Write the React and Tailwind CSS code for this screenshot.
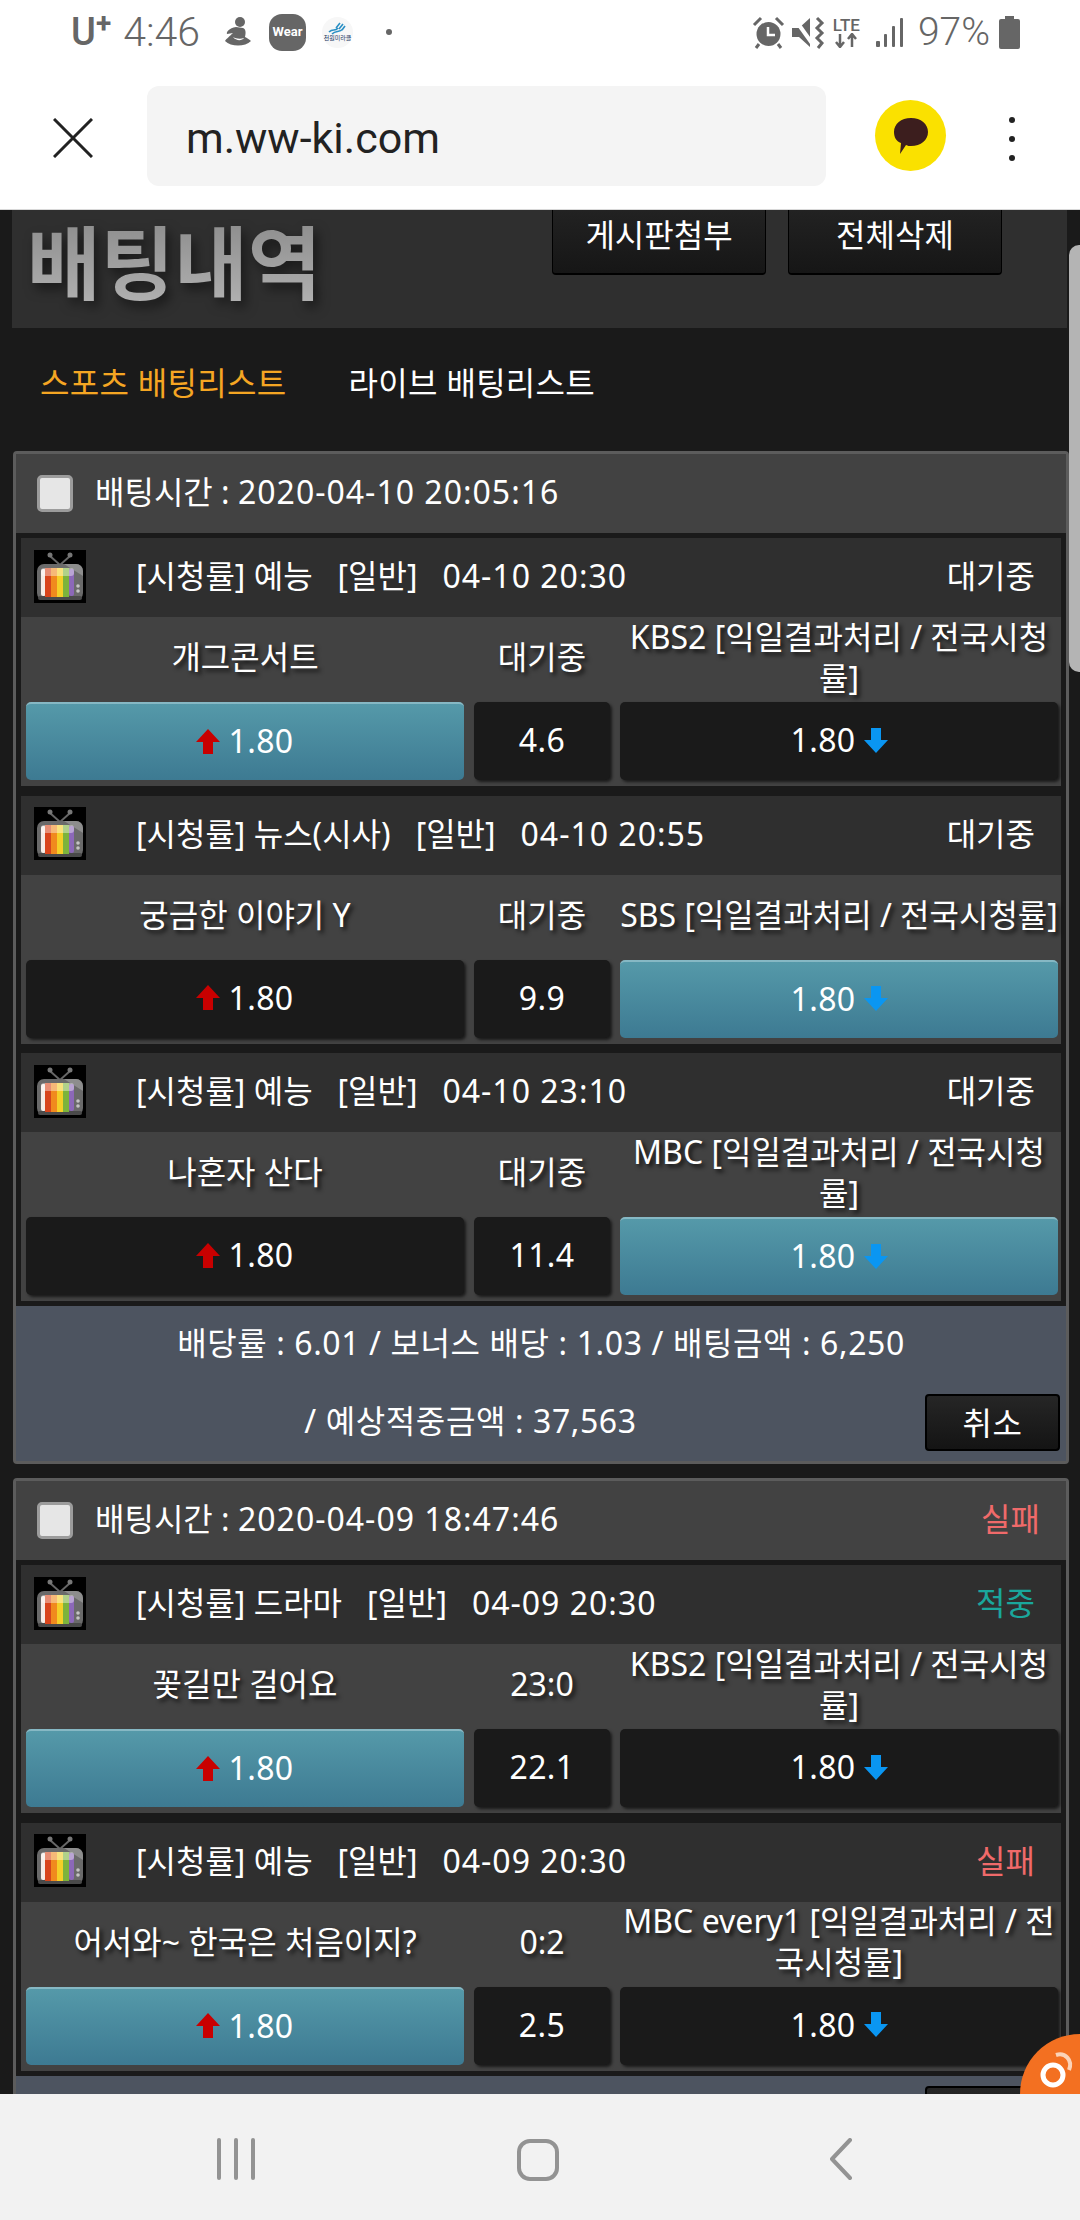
const cards = [
  {
    time: '2020-04-10 20:05:16',
    result: '',
    rows: [
      { title: '[시청률] 예능', date: '04-10 20:30', status: '대기중', statusColor: 'text-white', home: '개그콘서트', mid: '대기중', away: 'KBS2 [익일결과처리 / 전국시청률]', line: '4.6', pick: 'home' },
      { title: '[시청률] 뉴스(시사)', date: '04-10 20:55', status: '대기중', statusColor: 'text-white', home: '궁금한 이야기 Y', mid: '대기중', away: 'SBS [익일결과처리 / 전국시청률]', line: '9.9', pick: 'away' },
      { title: '[시청률] 예능', date: '04-10 23:10', status: '대기중', statusColor: 'text-white', home: '나혼자 산다', mid: '대기중', away: 'MBC [익일결과처리 / 전국시청률]', line: '11.4', pick: 'away' },
    ],
  },
  {
    time: '2020-04-09 18:47:46',
    result: '실패',
    rows: [
      { title: '[시청률] 드라마', date: '04-09 20:30', status: '적중', statusColor: 'text-[#1aa79c]', home: '꽃길만 걸어요', mid: '23:0', away: 'KBS2 [익일결과처리 / 전국시청률]', line: '22.1', pick: 'home' },
      { title: '[시청률] 예능', date: '04-09 20:30', status: '실패', statusColor: 'text-[#f06a6a]', home: '어서와~ 한국은 처음이지?', mid: '0:2', away: 'MBC every1 [익일결과처리 / 전국시청률]', line: '2.5', pick: 'home' },
    ],
  },
];

function UpArrow() {
  return (
    <svg width="24" height="25" viewBox="0 0 24 25" className="shrink-0">
      <path d="M12 0 L24 13 L17 13 L17 25 L7 25 L7 13 L0 13 Z" fill="#c90000" />
    </svg>
  );
}

function DownArrow() {
  return (
    <svg width="24" height="25" viewBox="0 0 24 25" className="shrink-0">
      <path d="M12 25 L24 12 L17 12 L17 0 L7 0 L7 12 L0 12 Z" fill="#0a96f2" />
    </svg>
  );
}

function TvIcon() {
  return (
    <svg width="52" height="53" viewBox="0 0 52 53" className="shrink-0">
      <rect width="52" height="53" fill="#000" />
      <path d="M16 6 L26 15 L36 6" stroke="#666" strokeWidth="2" fill="none" />
      <circle cx="16" cy="5" r="2.5" fill="#777" />
      <circle cx="36" cy="5" r="2.5" fill="#777" />
      <rect x="3" y="14" width="46" height="36" rx="7" fill="#6a6a6a" />
      <path d="M30 14 H42 a7 7 0 0 1 7 7 V26 Z" fill="#8d8d8d" />
      <rect x="4" y="46" width="44" height="4" rx="2" fill="#4a4a4a" />
      <g>
        <rect x="7" y="19" width="5" height="27" rx="2" fill="#f5ece6" />
        <rect x="11" y="18" width="6" height="29" fill="#d8451c" />
        <rect x="17" y="18" width="6" height="29" fill="#f08a1e" />
        <rect x="23" y="18" width="6" height="29" fill="#f4cf28" />
        <rect x="29" y="18" width="6" height="29" fill="#7cb33c" />
        <rect x="35" y="19" width="5" height="27" rx="2" fill="#8c68b8" />
        <rect x="7" y="18" width="33" height="8" rx="3" fill="#fff" opacity="0.4" />
      </g>
      <circle cx="44" cy="36" r="1.8" fill="#c4c4c4" />
      <circle cx="44" cy="41" r="1.8" fill="#c4c4c4" />
    </svg>
  );
}

function Odds({ picked, children }) {
  return (
    <div
      className={`flex h-[78px] items-center justify-center gap-[8px] rounded-[5px] pb-[2px] text-[32px] leading-[44px] tracking-[0.4px] text-white ${
        picked
          ? 'border-t-2 border-[#86b8c4] bg-gradient-to-b from-[#5599a9] to-[#3d7a92]'
          : 'bg-[#1a1a1a] shadow-[2px_2px_3px_rgba(0,0,0,0.6)]'
      }`}
    >
      {children}
    </div>
  );
}

function BetRow({ row }) {
  const nameClass =
    'flex items-center justify-center pb-[6px] text-center text-[32px] leading-[41px] text-white break-all [text-shadow:3px_3px_4px_rgba(0,0,0,0.75)]';

  return (
    <div className="bg-[#424242]">
      <div className="flex h-[79px] items-center bg-[#2f2f2f] pb-[3px] pl-[13px] pr-[26px] text-[32px] leading-[44px] text-white">
        <TvIcon />
        <div className="ml-[50px] flex-1 whitespace-pre">
          {row.title}   [일반]   <span className="tracking-[1px]">{row.date}</span>
        </div>
        <div className={row.statusColor}>{row.status}</div>
      </div>
      <div className="grid grid-cols-[438px_136px_438px] grid-rows-[85px_78px] gap-x-[10px] px-[5px]">
        <div className={nameClass}>{row.home}</div>
        <div className={nameClass}>{row.mid}</div>
        <div className={nameClass}>{row.away}</div>
        <Odds picked={row.pick === 'home'}>
          <UpArrow />
          <span>1.80</span>
        </Odds>
        <Odds>
          <span>{row.line}</span>
        </Odds>
        <Odds picked={row.pick === 'away'}>
          <span>1.80</span>
          <DownArrow />
        </Odds>
      </div>
      <div className="h-[6px]" />
    </div>
  );
}

function CancelButton() {
  return (
    <button className="h-[57px] w-[135px] shrink-0 rounded-[4px] border-2 border-black bg-gradient-to-b from-[#262626] to-[#141414] text-[32px] leading-[44px] text-white">
      취소
    </button>
  );
}

function BetCard({ card, index }) {
  return (
    <div className={`ml-[13px] w-[1056px] rounded-[4px] border-[3px] border-[#5c5c5c] bg-[#1a1a1a] ${index > 0 ? 'mt-[14px]' : ''}`}>
      <div className="flex h-[79px] items-center bg-[#424242] pb-[3px] pl-[21px] pr-[26px] text-[32px] leading-[44px] text-white">
        <div className="mt-[3px] h-[37px] w-[36px] rounded-[5px] border-[3px] border-[#9c9c9c] bg-[#e6e6e6]" />
        <div className="ml-[22px] flex-1">
          배팅시간 : <span className="tracking-[1px]">{card.time}</span>
        </div>
        <div className="text-[#f06a6a]">{card.result}</div>
      </div>
      <div className="flex flex-col gap-[9.5px] px-[5px] pt-[5px]">
        {card.rows.map((row, i) => (
          <BetRow key={i} row={row} />
        ))}
      </div>
      {index === 0 ? (
        <div className="mt-[5px] bg-[#4d5460] text-[32px] tracking-[0.6px] text-white">
          <div className="h-[78px] text-center leading-[74px]">
            배당률 : 6.01 / 보너스 배당 : 1.03 / 배팅금액 : 6,250
          </div>
          <div className="flex h-[77px] items-center pr-[6px]">
            <div className="flex-1 pb-[4px] text-center">/ 예상적중금액 : 37,563</div>
            <CancelButton />
          </div>
        </div>
      ) : (
        <div className="mt-[5px] flex justify-end bg-[#4d5460] pr-[6px] pt-[10px]">
          <CancelButton />
        </div>
      )}
    </div>
  );
}

function StatusBar() {
  return (
    <div className="flex h-[70px] items-center pb-[6px] pl-[71px] pr-[60px] text-[#666666]">
      <span className="relative text-[38px] font-medium leading-none font-['Roboto',sans-serif]">
        U<span className="relative -top-[12px] text-[28px] font-bold">+</span>
      </span>
      <span className="ml-[12px] text-[41px] font-light leading-none font-['Roboto',sans-serif]">4:46</span>
      <svg width="28" height="32" viewBox="0 0 28 32" className="ml-[24px]">
        <circle cx="16" cy="6" r="5" fill="#666" />
        <path d="M12 11 C5 12 2 16 3 18 L9 17 C6 20 2 23 1 25 C7 31 21 31 27 25 C25 23 23 22 21 21 C22 17 22 13 19 12 Z M9 21 C12 23 17 23 20 22 C18 25 12 25 9 21 Z" fill="#666" />
      </svg>
      <div className="ml-[17px] flex h-[37px] w-[37px] items-center justify-center rounded-[13px] bg-[#666666] text-[13px] font-bold text-white font-['Roboto',sans-serif]">
        Wear
      </div>
      <div className="ml-[16px] flex h-[31px] w-[31px] flex-col items-center justify-center rounded-full bg-[#f7f7f7]">
        <svg width="18" height="13" viewBox="0 0 18 13">
          <path d="M1 10 C5 6 7 10 10 6 M4 12 C8 8 11 11 15 7 M8 6 L12 1 M11 7 L15 2 M14 8 L17 4" stroke="#2a8fc4" strokeWidth="1.6" fill="none" />
        </svg>
        <span className="text-[6px] leading-[7px] text-[#16365f]">천원미라클</span>
      </div>
      <div className="ml-[33px] h-[6px] w-[6px] rounded-full bg-[#666666]" />
      <div className="flex-1" />
      <svg width="33" height="33" viewBox="0 0 33 33">
        <circle cx="16.5" cy="18" r="12" fill="#666" />
        <path d="M16 11 V19 H23" stroke="#fff" strokeWidth="2.5" fill="none" />
        <path d="M2 9 L9 2 M31 9 L24 2 M7 28 L4 32 M26 28 L29 32" stroke="#666" strokeWidth="3" />
      </svg>
      <svg width="34" height="33" viewBox="0 0 34 33" className="ml-[7px]">
        <path d="M0 12 H7 L18 2 V31 L7 21 H0 Z" fill="#666" />
        <path d="M2 2 L22 30" stroke="#fff" strokeWidth="4" />
        <path d="M25 2 L30 7 L25 12 L30 17 L25 22 L30 27 L26 32" stroke="#666" strokeWidth="3" fill="none" />
      </svg>
      <div className="ml-[5px] flex w-[31px] flex-col items-center">
        <span className="text-[17px] font-medium leading-[16px] font-['Roboto',sans-serif]">LTE</span>
        <svg width="24" height="15" viewBox="0 0 24 15">
          <path d="M6 1 V13 M2 9 L6 14 L10 9 M18 14 V2 M14 6 L18 1 L22 6" stroke="#666" strokeWidth="2.5" fill="none" />
        </svg>
      </div>
      <svg width="28" height="32" viewBox="0 0 28 32" className="ml-[14px]">
        <rect x="0" y="25" width="4" height="6" rx="1" fill="#666" />
        <rect x="8" y="18" width="3" height="13" rx="1" fill="#666" />
        <rect x="16" y="10" width="3" height="21" rx="1" fill="#666" />
        <rect x="24" y="2" width="3" height="29" rx="1" fill="#666" />
      </svg>
      <span className="ml-[14px] text-[39px] font-light leading-none font-['Roboto',sans-serif]">97%</span>
      <svg width="21" height="33" viewBox="0 0 21 33" className="ml-[9px]">
        <path d="M6 0 H15 V3 H19 a2 2 0 0 1 2 2 V31 a2 2 0 0 1 -2 2 H2 a2 2 0 0 1 -2 -2 V5 a2 2 0 0 1 2 -2 H6 Z" fill="#666" />
      </svg>
    </div>
  );
}

function BrowserBar() {
  return (
    <div className="flex h-[140px] items-start border-b border-[#d8d8d8] bg-white pt-[16px]">
      <svg width="40" height="40" viewBox="0 0 40 40" className="ml-[53px] mt-[32px]">
        <path d="M1 1 L39 39 M39 1 L1 39" stroke="#222" strokeWidth="3" />
      </svg>
      <div className="ml-[54px] flex h-[100px] w-[679px] items-center rounded-[12px] bg-[#f4f4f4] pl-[39px] pt-[4px] text-[43px] text-[#222222] font-['Roboto',sans-serif]">
        m.ww-ki.com
      </div>
      <div className="ml-[49px] mt-[14px] flex h-[71px] w-[71px] items-center justify-center rounded-full bg-[#fae100]">
        <svg width="36" height="38" viewBox="0 0 36 38">
          <path d="M18 1 C28 1 35 7 35 15 C35 23 28 29 18 29 C16 29 15 29 13 28 L7 37 L8 26 C3 24 1 20 1 15 C1 7 8 1 18 1 Z" fill="#3c1e1e" />
        </svg>
      </div>
      <div className="ml-[63px] mt-[31px] flex flex-col gap-[13px]">
        <div className="h-[6px] w-[6px] rounded-full bg-[#222222]" />
        <div className="h-[6px] w-[6px] rounded-full bg-[#222222]" />
        <div className="h-[6px] w-[6px] rounded-full bg-[#222222]" />
      </div>
    </div>
  );
}

function NavBar() {
  return (
    <div className="flex h-[126px] items-start bg-[#f2f2f2] pt-[44px]">
      <svg width="40" height="42" viewBox="0 0 40 42" className="ml-[216px]">
        <path d="M3 2 V40 M20 2 V40 M37 2 V40" stroke="#939393" strokeWidth="4" strokeLinecap="round" />
      </svg>
      <svg width="44" height="44" viewBox="0 0 44 44" className="ml-[260px]">
        <rect x="3" y="3" width="38" height="38" rx="11" fill="none" stroke="#939393" strokeWidth="4" />
      </svg>
      <svg width="26" height="42" viewBox="0 0 26 42" className="ml-[268px]">
        <path d="M22 2 L4 21 L22 40" fill="none" stroke="#939393" strokeWidth="4" strokeLinecap="round" strokeLinejoin="round" />
      </svg>
    </div>
  );
}

export default function App() {
  return (
    <div className="flex h-[2220px] w-[1080px] flex-col overflow-hidden bg-white font-['Noto_Sans','Noto_Sans_CJK_KR',sans-serif]">
      <StatusBar />
      <BrowserBar />
      <div className="relative min-h-0 flex-1 overflow-hidden bg-[#1a1a1a]">
        <div className="ml-[12px] flex h-[118px] w-[1055px] items-start justify-between bg-[#2f2f2f] pr-[65px]">
          <h1 className="ml-[15px] mt-[2px] bg-gradient-to-b from-[#8a8a8a] to-[#b4b4b4] bg-clip-text text-[80px] font-bold leading-[100px] text-transparent drop-shadow-[4px_6px_6px_rgba(0,0,0,0.5)]">
            배팅내역
          </h1>
          <div className="flex gap-[22px]">
            <button className="h-[65px] w-[214px] rounded-b-[4px] border-x border-b-2 border-black bg-gradient-to-b from-[#222222] to-[#161616] pb-[13px] text-[32px] leading-[44px] text-white">
              게시판첨부
            </button>
            <button className="h-[65px] w-[214px] rounded-b-[4px] border-x border-b-2 border-black bg-gradient-to-b from-[#222222] to-[#161616] pb-[13px] text-[32px] leading-[44px] text-white">
              전체삭제
            </button>
          </div>
        </div>
        <div className="flex h-[123px] items-start pl-[40px] pt-[31px] text-[32px] leading-[48px] tracking-[0.3px]">
          <span className="text-[#f5a623]">스포츠 배팅리스트</span>
          <span className="ml-[62px] text-white">라이브 배팅리스트</span>
        </div>
        {cards.map((card, i) => (
          <BetCard key={i} card={card} index={i} />
        ))}
        <div className="absolute right-0 top-[35px] h-[427px] w-[11px] rounded-l-[10px] bg-[#b4b4b4]" />
        <svg width="60" height="60" viewBox="0 0 60 60" className="absolute bottom-0 right-0">
          <circle cx="60" cy="60" r="60" fill="#f37021" />
          <circle cx="33" cy="41" r="10" fill="none" stroke="#fff" strokeWidth="5" />
          <path d="M36 21 C45 18 53 26 49 36" fill="none" stroke="#fbd3b8" strokeWidth="4" />
        </svg>
      </div>
      <NavBar />
    </div>
  );
}
